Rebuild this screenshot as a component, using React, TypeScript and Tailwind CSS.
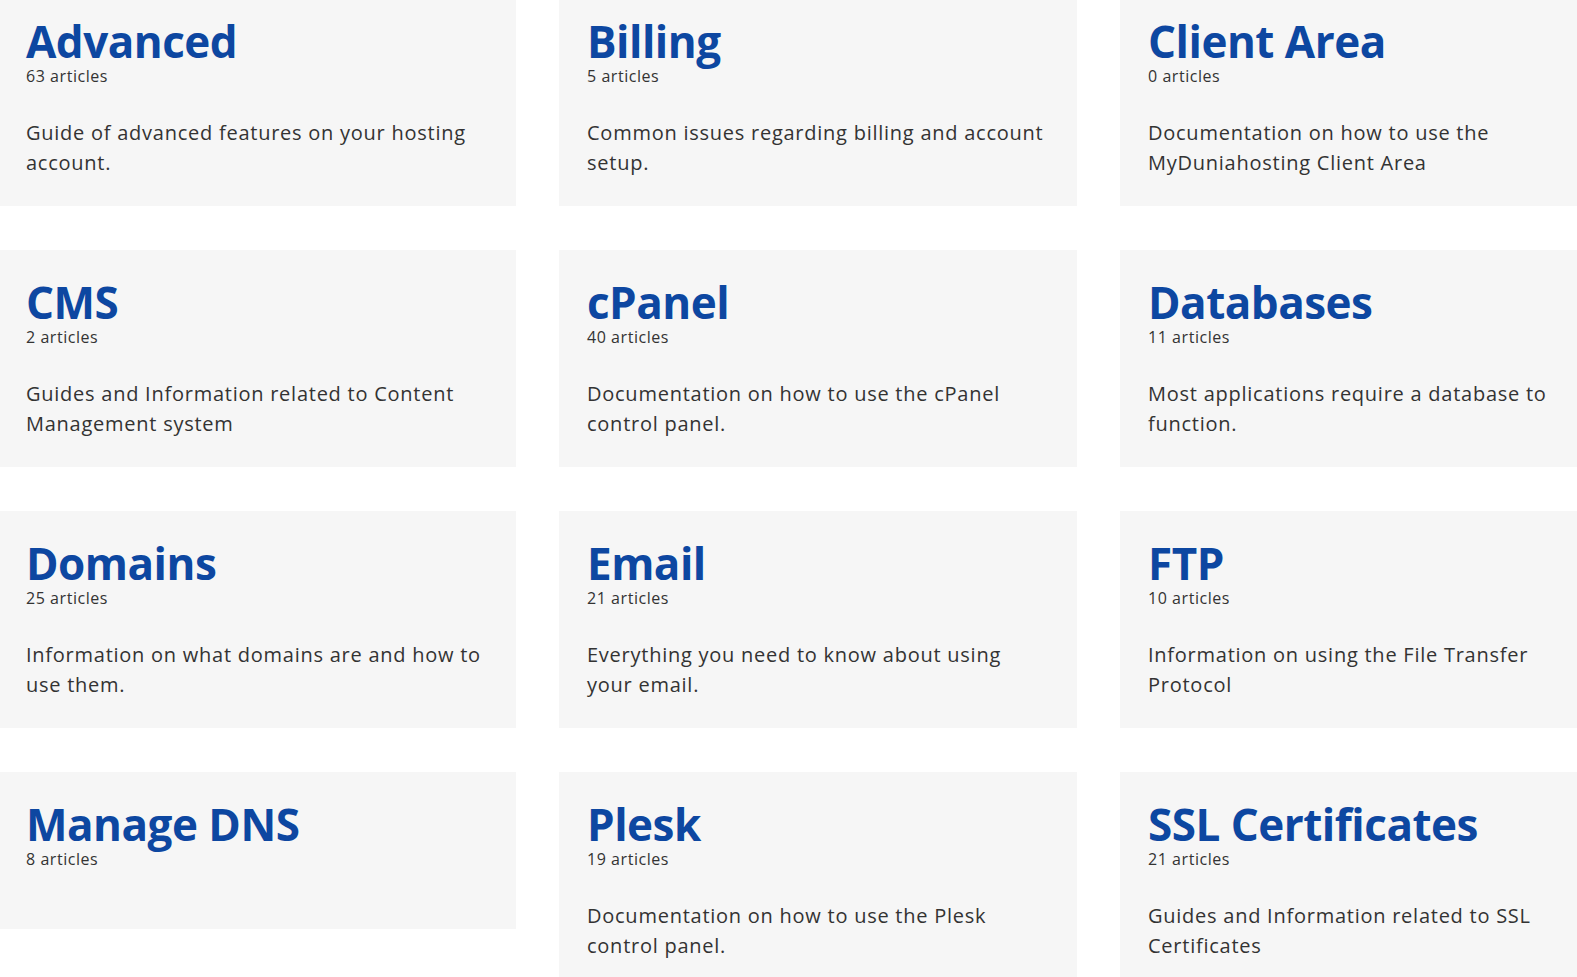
import React from 'react';

type Category = {
  title: string;
  count: number;
  description?: string;
};

const categories: Category[] = [
  { title: 'Advanced', count: 63, description: 'Guide of advanced features on your hosting account.' },
  { title: 'Billing', count: 5, description: 'Common issues regarding billing and account setup.' },
  { title: 'Client Area', count: 0, description: 'Documentation on how to use the MyDuniahosting Client Area' },
  { title: 'CMS', count: 2, description: 'Guides and Information related to Content Management system' },
  { title: 'cPanel', count: 40, description: 'Documentation on how to use the cPanel control panel.' },
  { title: 'Databases', count: 11, description: 'Most applications require a database to function.' },
  { title: 'Domains', count: 25, description: 'Information on what domains are and how to use them.' },
  { title: 'Email', count: 21, description: 'Everything you need to know about using your email.' },
  { title: 'FTP', count: 10, description: 'Information on using the File Transfer Protocol' },
  { title: 'Manage DNS', count: 8 },
  { title: 'Plesk', count: 19, description: 'Documentation on how to use the Plesk control panel.' },
  { title: 'SSL Certificates', count: 21, description: 'Guides and Information related to SSL Certificates' },
];

function CategoryCard({ title, count, description }: Category) {
  return (
    <a href="#" className="block bg-[#f6f6f6] px-[28px] pt-[29px] pb-[28px] no-underline">
      <h2 className="text-[44px] leading-[46px] font-bold text-[#0d47a1] tracking-[-0.5px]">{title}</h2>
      <div className="text-[16px] leading-[24px] text-[#333333] tracking-[0.55px] mb-[30px]">{count} articles</div>
      {description && (
        <p className="text-[20px] leading-[30px] text-[#333333] tracking-[0.75px]">{description}</p>
      )}
    </a>
  );
}

export default function App() {
  return (
    <div className="h-screen w-full overflow-hidden bg-white font-['Open_Sans',sans-serif]">
      <div className="grid grid-cols-[repeat(3,518px)] gap-x-[43px] gap-y-[44px] items-start ml-[-2px] mt-[-11px]">
        {categories.map((c) => (
          <CategoryCard key={c.title} {...c} />
        ))}
      </div>
    </div>
  );
}
